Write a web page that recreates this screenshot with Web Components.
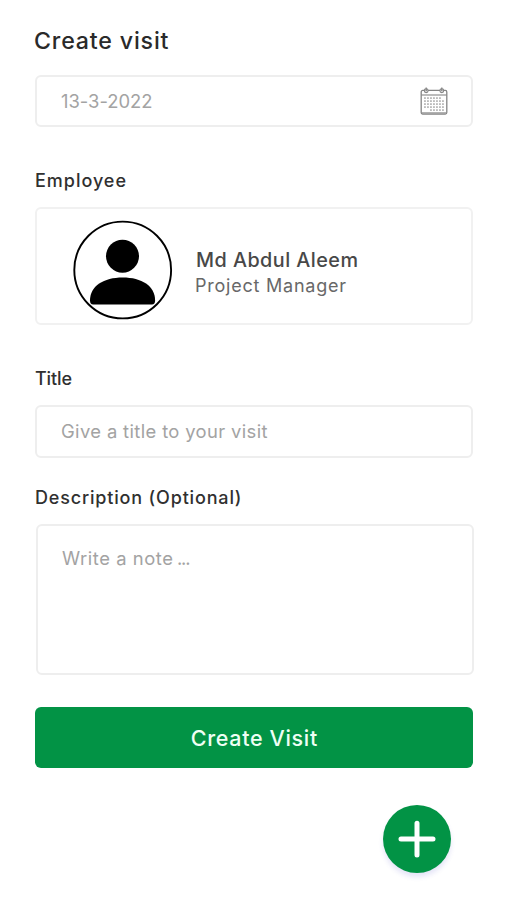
<!DOCTYPE html>
<html lang="en">
<head>
<meta charset="utf-8">
<title>Create visit</title>
<style>
html,body{margin:0;background:#fff}
body{font-family:Inter,"Liberation Sans",sans-serif}
</style>
</head>
<body>
<visit-form></visit-form>
<script>
// One line of text, tracked so that it spans the given width.
// An optional tail (such as an ellipsis) follows with tight spacing.
class TrackedText extends HTMLElement {
  connectedCallback() {
    const root = this.attachShadow({ mode: 'open' });
    root.innerHTML = '<style>:host{display:block;white-space:pre}.main{display:inline-block}.tail{letter-spacing:-1.2px}</style><span class="main"></span>';
    const span = root.querySelector('span');
    span.textContent = this.getAttribute('text');
    const width = parseFloat(this.getAttribute('width'));
    const natural = span.getBoundingClientRect().width;
    const gap = (width - natural) / (span.textContent.length - 1);
    span.style.letterSpacing = gap.toFixed(3) + 'px';
    span.style.marginRight = (-gap).toFixed(3) + 'px';
    if (this.hasAttribute('tail')) {
      const tail = document.createElement('span');
      tail.className = 'tail';
      tail.textContent = this.getAttribute('tail');
      root.append(tail);
    }
  }
}
customElements.define('tracked-text', TrackedText);

class FieldBox extends HTMLElement {
  connectedCallback() {
    this.attachShadow({ mode: 'open' }).innerHTML = `
      <style>
        :host{display:flex;align-items:center;justify-content:space-between;box-sizing:border-box;
          border:2px solid #eee;border-radius:6px;background:#fff;padding:0 23px 0 24px;
          color:#a3a3a3;font-size:18.4px;line-height:24px}
      </style><slot></slot>`;
  }
}
customElements.define('field-box', FieldBox);

class CalendarIcon extends HTMLElement {
  connectedCallback() {
    let cells = '';
    for (let r = 0; r < 5; r++)
      for (let c = 0; c < 7; c++) {
        if ((r === 0 && c === 6) || (r === 4 && c < 2)) continue;
        cells += `<rect x="${4 + c * 3}" y="${10.2 + r * 3}" width="1.9" height="1.8"/>`;
      }
    this.attachShadow({ mode: 'open' }).innerHTML = `
      <style>:host{display:block;width:28px;height:28px}svg{display:block}</style>
      <svg width="28" height="28" viewBox="0 0 28 28" fill="none" stroke="#858585">
        <rect x="1.2" y="3.4" width="25.6" height="23.6" rx="1.5" stroke-width="1.3"/>
        <path d="M1.5 8H26.5" stroke-width="1.1"/>
        <path d="M2 25.6H26" stroke-width="1" stroke="#aaa"/>
        <g fill="#ddd" stroke-width="1.1"><circle cx="6.2" cy="3.7" r="1.9"/><circle cx="21.8" cy="3.7" r="1.9"/></g>
        <path d="M6.2 .6V4M21.8 .6V4" stroke-width="1.3"/>
        <g fill="#bcbcbc" stroke="none">${cells}</g>
      </svg>`;
  }
}
customElements.define('calendar-icon', CalendarIcon);

class UserAvatar extends HTMLElement {
  connectedCallback() {
    this.attachShadow({ mode: 'open' }).innerHTML = `
      <style>:host{display:block;width:100px;height:100px}svg{display:block}</style>
      <svg width="100" height="100" viewBox="0 0 100 100">
        <circle cx="49.7" cy="50" r="48.4" fill="#fff" stroke="#000" stroke-width="1.9"/>
        <circle cx="49.5" cy="36.2" r="16.5"/>
        <path d="M20.2 84.6Q17 84.6 17 80.5C17 66 30.7 57.6 49.7 57.6S82.1 66 82.1 80.5Q82.1 84.6 78.9 84.6Z"/>
      </svg>`;
  }
}
customElements.define('user-avatar', UserAvatar);

class EmployeeCard extends HTMLElement {
  connectedCallback() {
    this.attachShadow({ mode: 'open' }).innerHTML = `
      <style>
        :host{display:flex;align-items:center;box-sizing:border-box;height:118px;padding:7px 0 0 36px;
          border:2px solid #f1f1f1;border-radius:6px}
        .who{display:grid;gap:2px;margin:0 0 0 22px;padding-top:7px}
        .name{font-size:19.8px;font-weight:500;line-height:24px;color:#484848;margin-left:1px}
        .role{font-size:18px;line-height:24px;color:#686868}
      </style>
      <user-avatar></user-avatar>
      <div class="who">
        <tracked-text class="name" text="Md Abdul Aleem" width="162"></tracked-text>
        <tracked-text class="role" text="Project Manager" width="151"></tracked-text>
      </div>`;
  }
}
customElements.define('employee-card', EmployeeCard);

class SubmitButton extends HTMLElement {
  connectedCallback() {
    this.attachShadow({ mode: 'open' }).innerHTML = `
      <style>
        :host{display:block}
        button{all:unset;display:flex;align-items:center;justify-content:center;box-sizing:border-box;
          width:100%;height:61px;border-radius:6px;background:#029345;color:#eefff4;
          font-size:21.5px;font-weight:500;line-height:26px}
      </style>
      <button type="button"><slot></slot></button>`;
  }
}
customElements.define('submit-button', SubmitButton);

class AddButton extends HTMLElement {
  connectedCallback() {
    this.attachShadow({ mode: 'open' }).innerHTML = `
      <style>
        :host{display:block;width:68px;height:68px}
        button{all:unset;display:block;width:68px;height:68px;border-radius:50%;background:#029345;
          box-shadow:0 4px 5px rgba(70,70,200,.14)}
        svg{display:block}
      </style>
      <button type="button" aria-label="Add">
        <svg width="68" height="68" viewBox="0 0 68 68" stroke="#fff" stroke-width="5" stroke-linecap="round">
          <path d="M34 18.2V50M18 34H50"/>
        </svg>
      </button>`;
  }
}
customElements.define('add-button', AddButton);

class VisitForm extends HTMLElement {
  connectedCallback() {
    this.attachShadow({ mode: 'open' }).innerHTML = `
      <style>
        :host{display:flex;flex-direction:column;box-sizing:border-box;width:507px;height:900px;
          padding:26px 34px 0 35px;background:#fff;overflow:hidden}
        h1,h2{margin:0;font-weight:500;color:#303030;line-height:24px;font-size:18px}
        h1{font-size:23.2px;line-height:30px;margin-bottom:19px;margin-left:-1px;color:#2a2a2a}
        section{display:flex;flex-direction:column}
        .date{height:52px}
        .date tracked-text{padding-bottom:1px}
        .title{height:53px;padding-bottom:2px}
        .employee{margin-top:42px;gap:14px}
        .subject{margin-top:42px;gap:14px}
        .details{margin-top:28px;gap:14px}
        .note{height:151px;margin:0 -1px 0 1px;align-items:flex-start;padding-top:20px}
        submit-button{margin-top:32px}
        add-button{align-self:flex-end;margin:37px 22px 0 0}
      </style>
      <h1><tracked-text text="Create visit" width="134.5"></tracked-text></h1>
      <field-box class="date"><tracked-text text="13-3-2022" width="91.5"></tracked-text><calendar-icon></calendar-icon></field-box>
      <section class="employee">
        <h2><tracked-text text="Employee" width="91"></tracked-text></h2>
        <employee-card></employee-card>
      </section>
      <section class="subject">
        <h2><tracked-text text="Title" width="37"></tracked-text></h2>
        <field-box class="title"><tracked-text text="Give a title to your visit" width="206.5"></tracked-text></field-box>
      </section>
      <section class="details">
        <h2><tracked-text text="Description (Optional)" width="206.5"></tracked-text></h2>
        <field-box class="note"><tracked-text text="Write a note" width="111" tail=" ..."></tracked-text></field-box>
      </section>
      <submit-button><tracked-text text="Create Visit" width="126.5"></tracked-text></submit-button>
      <add-button></add-button>`;
  }
}
customElements.define('visit-form', VisitForm);
</script>
</body>
</html>
